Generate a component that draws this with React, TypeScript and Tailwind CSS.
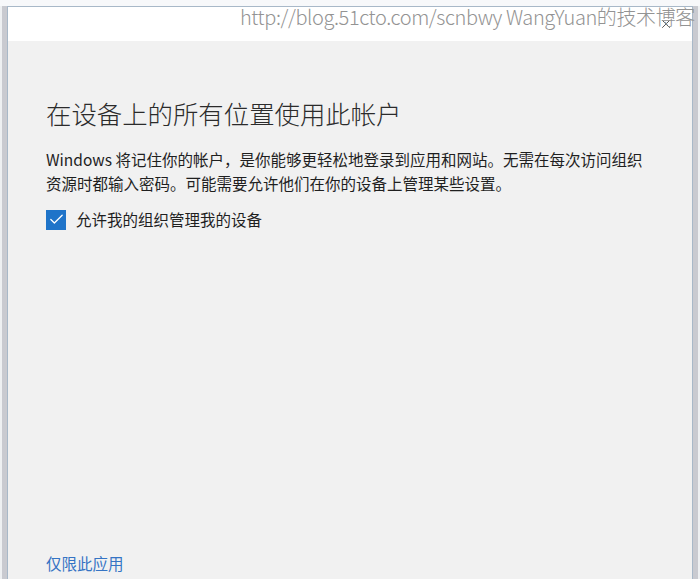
import { Check, X } from "lucide-react"

const cjk = { fontFamily: '"Noto Sans CJK SC", "Noto Sans", sans-serif' }

export default function App() {
  return (
    <div className="relative flex h-[579px] w-[700px] flex-col overflow-hidden bg-[#f5f7f9]" style={cjk}>
      <div className="h-[6px] shrink-0 bg-[#f7f8fa]" />
      <div className="flex min-h-0 flex-1">
        <div className="flex w-[7px] shrink-0">
          <div className="w-[2px] bg-[#eef0f2]" />
          <div className="flex-1 bg-[#c9cad0]" />
        </div>
        <div className="flex min-w-0 flex-1 flex-col border-x border-t border-[#a8b8c8]">
          <div className="flex h-[34px] shrink-0 items-start justify-end bg-white pr-[19px] pt-[10px]">
            <X className="h-[14px] w-[14px] text-[#333]" strokeWidth={1.4} />
          </div>
          <div className="flex flex-1 flex-col bg-[#f1f1f1] pl-[38px] pr-[30px] pt-[55px] pb-[4px]">
            <h1 className="text-[25.4px] font-light leading-[34px] text-[#2b2b2b]">在设备上的所有位置使用此帐户</h1>
            <p className="mt-[17px] text-[15.5px] leading-[24px] text-[#1f1f1f]">
              Windows 将记住你的帐户，是你能够更轻松地登录到应用和网站。无需在每次访问组织
              <br />
              资源时都输入密码。可能需要允许他们在你的设备上管理某些设置。
            </p>
            <label className="mt-[13px] flex items-center gap-[10px] text-[15.5px] text-[#1f1f1f]">
              <span className="flex h-[20px] w-[20px] items-center justify-center bg-[#1f74c9]">
                <Check className="h-[17px] w-[17px] text-white" strokeWidth={1.8} />
              </span>
              允许我的组织管理我的设备
            </label>
            <div className="flex-1" />
            <a href="#" className="text-[15.5px] leading-[24px] text-[#3574c4]">仅限此应用</a>
          </div>
        </div>
        <div className="flex w-[7px] shrink-0">
          <div className="flex-1 bg-[#c9cad0]" />
          <div className="w-[2px] bg-[#eef0f2]" />
        </div>
      </div>
      <div className="pointer-events-none absolute left-[240px] top-[2px] whitespace-nowrap text-[20px] font-light tracking-[-0.4px] text-[#939393]">
        http://blog.51cto.com/scnbwy WangYuan的技术博客
      </div>
    </div>
  )
}
